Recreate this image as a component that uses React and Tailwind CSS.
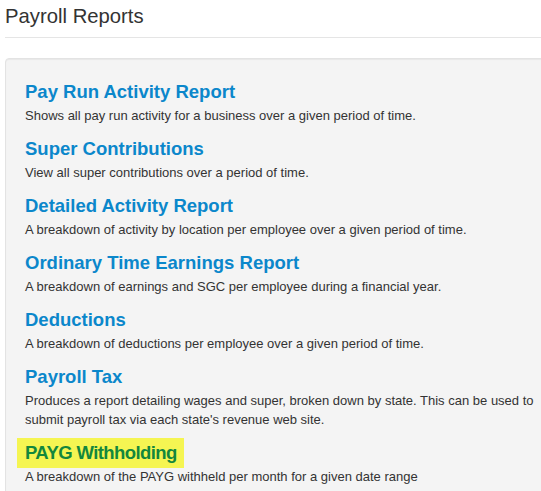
const REPORTS = [
  {
    title: "Pay Run Activity Report",
    desc: "Shows all pay run activity for a business over a given period of time.",
  },
  {
    title: "Super Contributions",
    desc: "View all super contributions over a period of time.",
  },
  {
    title: "Detailed Activity Report",
    desc: "A breakdown of activity by location per employee over a given period of time.",
  },
  {
    title: "Ordinary Time Earnings Report",
    desc: "A breakdown of earnings and SGC per employee during a financial year.",
  },
  {
    title: "Deductions",
    desc: "A breakdown of deductions per employee over a given period of time.",
  },
  {
    title: "Payroll Tax",
    desc: "Produces a report detailing wages and super, broken down by state. This can be used to submit payroll tax via each state's revenue web site.",
  },
  {
    title: "PAYG Withholding",
    desc: "A breakdown of the PAYG withheld per month for a given date range",
    highlight: true,
  },
];

export default function App() {
  return (
    <div
      className="w-[541px] h-[491px] overflow-hidden bg-white text-[#333]"
      style={{ fontFamily: '"Liberation Sans", Arial, sans-serif' }}
    >
      <div className="pl-[5px] w-[600px]">
        <h1 className="text-[20.3px] leading-[24px] pt-[4px] pb-[9px] border-b border-[#e5e5e5] font-normal">
          Payroll Reports
        </h1>

        {/* report list well */}
        <div className="mt-[20px] w-[566px] bg-[#f4f4f4] border border-[#e3e3e3] rounded-[4px] shadow-[inset_0_1px_1px_rgba(0,0,0,0.05)] px-[19px] pt-[23px] pb-[19px]">
          {REPORTS.map((r) => (
            <div key={r.title} className="mb-[14px]">
              <h3 className="text-[18.5px] leading-[20px] font-bold">
                {r.highlight ? (
                  <a className="inline-block bg-[#f5f552] text-[#13873d] tracking-[-0.6px] pl-[8px] pr-[7px] py-[5px] -ml-[8px] -my-[5px] cursor-pointer">
                    {r.title}
                  </a>
                ) : (
                  <a className="text-[#0b87cb] cursor-pointer">{r.title}</a>
                )}
              </h3>
              <p className="mt-[4px] text-[13px] leading-[19px]">{r.desc}</p>
            </div>
          ))}
        </div>
      </div>
    </div>
  );
}
